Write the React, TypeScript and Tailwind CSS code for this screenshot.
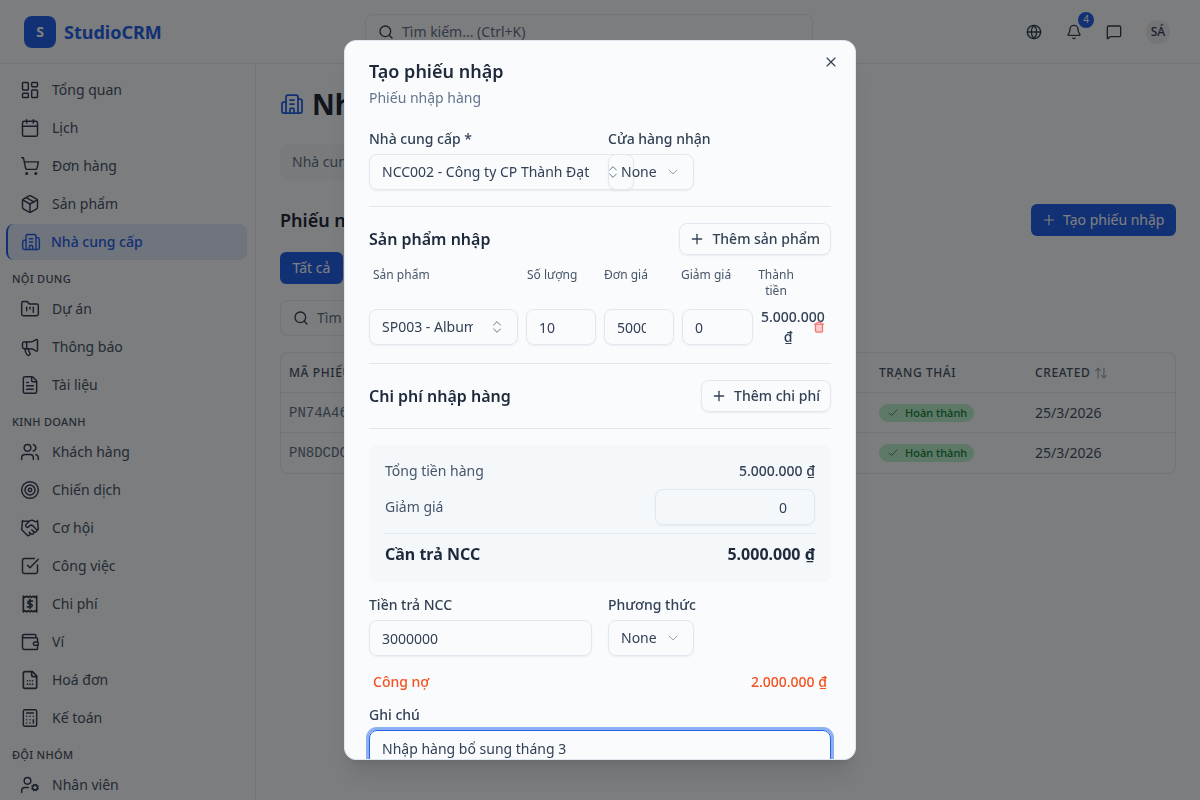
import {
  ArrowUpDown, Bell, Building2, Calculator, Calendar, Check, ChevronDown, ChevronsUpDown, FileText, FolderKanban,
  Globe, Handshake, LayoutDashboard, Megaphone, MessageSquare, Package, Plus, Search, ShoppingCart, SquareCheckBig,
  Target, Trash2, UserCog, Users, Wallet, X,
} from "lucide-react";
import type { ReactNode } from "react";

// lucide has no close match for these two
function ReceiptDollar({ className }: { className?: string }) {
  return (
    <svg viewBox="0 0 24 24" fill="none" stroke="currentColor" strokeWidth="2" strokeLinecap="round" strokeLinejoin="round" className={className}>
      <path d="M4 2.5l2 1.5 2-1.5 2 1.5 2-1.5 2 1.5 2-1.5 2 1.5 2-1.5v19l-2-1.5-2 1.5-2-1.5-2 1.5-2-1.5-2 1.5-2-1.5-2 1.5z" />
      <path d="M15 8.5h-4.2a1.8 1.8 0 0 0 0 3.5h2.4a1.8 1.8 0 0 1 0 3.5H9" />
      <path d="M12 6.5v11" />
    </svg>
  );
}

function FileDots({ className }: { className?: string }) {
  return (
    <svg viewBox="0 0 24 24" fill="none" stroke="currentColor" strokeWidth="2" strokeLinecap="round" strokeLinejoin="round" className={className}>
      <path d="M15 2H6a2 2 0 0 0-2 2v16a2 2 0 0 0 2 2h12a2 2 0 0 0 2-2V7z" />
      <path d="M14 2v4a2 2 0 0 0 2 2h4" />
      <path d="M9 13h.01M12 13h.01M15 13h.01M9 17h.01M12 17h.01M15 17h.01" />
    </svg>
  );
}

const groups = [
  {
    items: [
      { label: "Tổng quan", icon: LayoutDashboard },
      { label: "Lịch", icon: Calendar },
      { label: "Đơn hàng", icon: ShoppingCart },
      { label: "Sản phẩm", icon: Package },
      { label: "Nhà cung cấp", icon: Building2, active: true },
    ],
  },
  {
    title: "NỘI DUNG",
    items: [
      { label: "Dự án", icon: FolderKanban },
      { label: "Thông báo", icon: Megaphone },
      { label: "Tài liệu", icon: FileText },
    ],
  },
  {
    title: "KINH DOANH",
    items: [
      { label: "Khách hàng", icon: Users },
      { label: "Chiến dịch", icon: Target },
      { label: "Cơ hội", icon: Handshake },
      { label: "Công việc", icon: SquareCheckBig },
      { label: "Chi phí", icon: ReceiptDollar },
      { label: "Ví", icon: Wallet },
      { label: "Hoá đơn", icon: FileDots },
      { label: "Kế toán", icon: Calculator },
    ],
  },
  {
    title: "ĐỘI NHÓM",
    items: [{ label: "Nhân viên", icon: UserCog }],
  },
];

function Sidebar() {
  return (
    <aside className="w-64 shrink-0 border-r border-[#e2e8f0] h-[736px] overflow-hidden pt-[7px]">
      {groups.map((group, i) => (
        <div key={i}>
          {group.title && <div className="pl-3 pt-[10px] h-[29px] text-[11px] leading-4 font-medium tracking-[0.3px] text-[#475569]">{group.title}</div>}
          {group.items.map((item) =>
            item.active ? (
              <div key={item.label} className="ml-1.5 my-px w-[241px] h-9 flex items-center gap-2.5 pl-[13px] rounded-lg border-l-2 border-[#2563eb] bg-[#e0e8f8] text-sm font-medium text-[#2563eb]">
                <item.icon className="size-5" strokeWidth={1.75} />
                {item.label}
              </div>
            ) : (
              <div key={item.label} className="h-[38px] flex items-center gap-3 pl-[20px] text-sm text-[#475569]">
                <item.icon className="size-5 text-[#334155]" strokeWidth={1.75} />
                {item.label}
              </div>
            ),
          )}
        </div>
      ))}
    </aside>
  );
}

function Header() {
  return (
    <header className="h-16 flex items-center border-b border-[#e2e8f0] pl-6 pr-[30px]">
      <div className="flex items-center gap-2 w-[341px]">
        <div className="size-8 rounded-lg bg-[#2563eb] text-white text-sm font-bold flex items-center justify-center">S</div>
        <span className="text-lg font-bold text-[#2563eb]">StudioCRM</span>
      </div>
      <div className="w-[448px] h-9 mt-px rounded-lg border border-[#e2e8f0] flex items-center gap-2 pl-3 text-sm text-[#64748b]">
        <Search className="size-4 text-[#334155]" />
        Tìm kiếm... (Ctrl+K)
      </div>
      <div className="ml-auto flex items-center text-[#334155]">
        <Globe className="size-4" />
        <div className="relative ml-6">
          <Bell className="size-4" />
          <span className="absolute -top-[12px] -right-[12px] size-4 rounded-full bg-[#2563eb] text-white text-[10px] flex items-center justify-center">4</span>
        </div>
        <MessageSquare className="size-4 ml-6" />
        <div className="ml-[24px] size-6 rounded-full bg-[#e8ebef] text-xs font-medium flex items-center justify-center">SÁ</div>
      </div>
    </header>
  );
}

function StatusBadge() {
  return (
    <span className="inline-flex items-center gap-[6px] h-[18px] w-[95px] pl-2 rounded-full bg-[#bbf0cf] text-[11px] font-medium text-[#15803d]">
      <Check className="size-3" strokeWidth={1.5} />
      Hoàn thành
    </span>
  );
}

function Main() {
  const rows = ["PN74A46C", "PN8DCDC1"];
  return (
    <main className="flex-1 h-[736px] overflow-hidden px-6 pt-6">
      <div className="flex items-center gap-2 h-8">
        <Building2 className="size-6 text-[#2563eb]" strokeWidth={1.75} />
        <h1 className="text-[28px] font-bold text-[#1e293b] leading-8">Nhà cung cấp</h1>
      </div>
      <div className="mt-6 h-9 w-[400px] rounded-lg bg-[#f1f5f9] flex items-center px-3 text-sm text-[#64748b]">Nhà cung cấp</div>
      <div className="mt-6 h-8 flex items-center justify-between">
        <h2 className="text-lg font-semibold text-[#1e293b]">Phiếu nhập</h2>
        <button className="h-8 w-[145px] rounded-md bg-[#2563eb] text-white text-sm flex items-center pl-[10px] gap-1.5">
          <Plus className="size-4" strokeWidth={1.75} />
          Tạo phiếu nhập
        </button>
      </div>
      <button className="block mt-4 h-8 w-[63px] rounded-md bg-[#2563eb] text-white text-sm">Tất cả</button>
      <div className="mt-4 h-9 w-[400px] rounded-lg border border-[#e2e8f0] flex items-center gap-2 pl-3 text-sm text-[#64748b]">
        <Search className="size-4 text-[#334155]" />
        Tìm kiếm
      </div>
      <div className="mt-4 rounded-lg border border-[#e2e8f0] overflow-hidden">
        <div className="h-10 flex items-center border-b border-[#e2e8f0] text-xs font-medium tracking-[0.6px] text-[#475569]">
          <span className="w-[598px] pl-2">MÃ PHIẾU</span>
          <span className="w-[156px]">TRẠNG THÁI</span>
          <span className="flex items-center gap-1">
            CREATED
            <ArrowUpDown className="size-3.5 opacity-50" />
          </span>
        </div>
        {rows.map((code, i) => (
          <div key={code} className={`h-10 flex items-center text-sm text-[#475569] ${i === 0 ? "border-b border-[#e2e8f0]" : ""}`}>
            <span className="w-[598px] pl-2 font-['Liberation_Mono',monospace] text-sm text-[#64748b]">{code}</span>
            <span className="w-[156px] flex">
              <StatusBadge />
            </span>
            <span>25/3/2026</span>
          </div>
        ))}
      </div>
    </main>
  );
}

function Field({ className, children }: { className?: string; children: ReactNode }) {
  return <div className={`h-9 rounded-lg border border-[#e2e8f0] shadow-[0_1px_2px_rgba(15,23,42,0.06)] flex items-center text-sm text-[#334155] ${className ?? ""}`}>{children}</div>;
}

function NoneSelect() {
  return (
    <Field className="w-[86px] pl-3 pr-3 justify-between">
      None
      <ChevronDown className="size-4 text-[#94a3b8]" strokeWidth={1.5} />
    </Field>
  );
}

function NumberField({ value, className }: { value: string; className: string }) {
  return (
    <input
      readOnly
      value={value}
      className={`h-9 rounded-lg border border-[#e2e8f0] shadow-[0_1px_2px_rgba(15,23,42,0.06)] pl-3 pr-[27px] text-sm text-[#334155] outline-none ${className}`}
    />
  );
}

function AddButton({ label }: { label: string }) {
  return (
    <button className="h-8 rounded-lg border border-[#e2e8f0] shadow-[0_1px_2px_rgba(15,23,42,0.06)] pl-[9px] pr-[10px] flex items-center gap-[7px] text-sm font-medium text-[#334155]">
      <Plus className="size-4" strokeWidth={2} />
      {label}
    </button>
  );
}

function Dialog() {
  return (
    <div className="fixed left-[344px] top-10 w-[512px] h-[720px] overflow-hidden rounded-xl border border-[#e2e8f0] bg-[#f9fbfd] shadow-xl px-6 pt-4">
      <X className="absolute right-4 top-[13px] size-4 text-[#334155]" strokeWidth={1.75} />
      <h2 className="text-lg leading-7 font-semibold text-[#1e293b]">Tạo phiếu nhập</h2>
      <p className="mt-[3px] text-sm leading-5 text-[#64748b]">Phiếu nhập hàng</p>

      <div className="mt-[21px] grid grid-cols-2 gap-x-4">
        <div>
          <div className="text-sm leading-5 font-medium text-[#334155]">Nhà cung cấp *</div>
          <Field className="mt-[5px] w-[265px] pl-3 pr-3 justify-between">
            <span>NCC002 - Công ty CP Thành Đạt</span>
            <ChevronsUpDown className="size-4 text-[#64748b]" strokeWidth={1.5} />
          </Field>
        </div>
        <div>
          <div className="text-sm leading-5 font-medium text-[#334155]">Cửa hàng nhận</div>
          <div className="mt-[5px]">
            <NoneSelect />
          </div>
        </div>
      </div>
      <div className="mt-4 border-t border-[#e2e8f0]" />

      <div className="mt-4 flex items-center justify-between">
        <h3 className="text-base font-semibold text-[#1e293b]">Sản phẩm nhập</h3>
        <AddButton label="Thêm sản phẩm" />
      </div>
      <div className="mt-3 flex items-start text-xs leading-4 text-[#475569]">
        <span className="w-[158px] pl-1">Sản phẩm</span>
        <span className="w-[77px]">Số lượng</span>
        <span className="w-[77px]">Đơn giá</span>
        <span className="w-[77px]">Giảm giá</span>
        <span className="w-9 text-center">Thành tiền</span>
      </div>
      <div className="mt-2 h-10 flex items-center">
        <Field className="w-[149px] pl-3 pr-3">
          <span className="w-[91px] overflow-hidden whitespace-nowrap">SP003 - Album ảnh</span>
          <ChevronsUpDown className="size-4 ml-auto text-[#64748b]" strokeWidth={1.5} />
        </Field>
        <NumberField value="10" className="ml-2 w-[70px]" />
        <NumberField value="5000000" className="ml-2 w-[70px]" />
        <NumberField value="0" className="ml-2 w-[71px]" />
        <div className="ml-2 w-[54px] shrink-0 text-center text-sm leading-5 font-medium text-[#334155]">5.000.000 ₫</div>
        <Trash2 className="size-3 ml-[-2px] shrink-0 text-[#f87171] fill-[#fecaca]" strokeWidth={2.5} />
      </div>
      <div className="mt-4 border-t border-[#e2e8f0]" />

      <div className="mt-4 flex items-center justify-between">
        <h3 className="text-base font-semibold text-[#1e293b]">Chi phí nhập hàng</h3>
        <AddButton label="Thêm chi phí" />
      </div>
      <div className="mt-4 border-t border-[#e2e8f0]" />

      <div className="mt-4 h-[137px] rounded-lg bg-[#f5f8fb] px-4 pt-4 text-sm text-[#475569]">
        <div className="flex justify-between h-5 items-center">
          <span>Tổng tiền hàng</span>
          <span className="font-medium text-[#334155]">5.000.000 ₫</span>
        </div>
        <div className="mt-2 flex justify-between h-9 items-center">
          <span className="mt-[-1px]">Giảm giá</span>
          <NumberField value="0" className="w-40 text-right" />
        </div>
        <div className="mt-2 border-t border-[#e2e8f0]" />
        <div className="mt-[8px] flex justify-between text-base font-bold leading-6 text-[#1e293b]">
          <span>Cần trả NCC</span>
          <span>5.000.000 ₫</span>
        </div>
      </div>

      <div className="mt-[13px] grid grid-cols-2 gap-x-4">
        <div>
          <div className="text-sm leading-5 font-medium text-[#334155]">Tiền trả NCC</div>
          <NumberField value="3000000" className="mt-[5px] w-full" />
        </div>
        <div>
          <div className="text-sm leading-5 font-medium text-[#334155]">Phương thức</div>
          <div className="mt-[5px]">
            <NoneSelect />
          </div>
        </div>
      </div>

      <div className="mt-4 px-1 flex justify-between text-sm leading-5 font-medium text-[#f4511e]">
        <span>Công nợ</span>
        <span>2.000.000 ₫</span>
      </div>

      <div className="mt-[13px] text-sm leading-5 font-medium text-[#334155]">Ghi chú</div>
      <div className="mt-[5px] h-20 rounded-lg border border-[#2563eb] ring-[3px] ring-[#2563eb]/50 px-3 py-2 text-sm leading-5 text-[#334155]">Nhập hàng bổ sung tháng 3</div>
    </div>
  );
}

export default function App() {
  return (
    <div className="w-[1200px] h-[800px] overflow-hidden bg-[#f8fafc] font-['Noto_Sans',sans-serif]">
      <Header />
      <div className="flex">
        <Sidebar />
        <Main />
      </div>
      <div className="fixed inset-0 bg-black/50" />
      <Dialog />
    </div>
  );
}
